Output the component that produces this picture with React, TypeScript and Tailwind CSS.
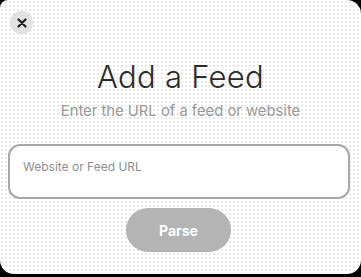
import React from 'react'

const App = () => {
    return (
        <div className="h-[277px] w-[361px] bg-black overflow-hidden" style={{fontFamily: 'Inter, "Noto Sans", sans-serif'}}>
            <div className="h-[274px] w-[361px] bg-white rounded-tl-[8px] rounded-tr-[14px] rounded-b-[14px] bg-[radial-gradient(#cfcfcf_0.6px,transparent_0.8px)] bg-[size:4px_4px] flex flex-col">
                {/* close */}
                <div className="pt-[11px] pl-[10px]">
                    <button className="h-[23px] w-[23px] rounded-full bg-[#e2e2e2] flex items-center justify-center">
                        <svg width="10" height="10" viewBox="0 0 10 10">
                            <path d="M1.5 1.5 L8.5 8.5 M8.5 1.5 L1.5 8.5" stroke="#222" strokeWidth="2.2" strokeLinecap="round"/>
                        </svg>
                    </button>
                </div>

                <h1 className="mt-[25px] text-center text-[31px] leading-[36px] font-light text-[#2b2b2b] tracking-[0.3px]">Add a Feed</h1>
                <p className="mt-[7px] text-center text-[14.8px] leading-[18px] text-[#9a9a9a]">Enter the URL of a feed or website</p>

                <div className="mt-[24px] px-[8px]">
                    <div className="h-[55px] w-[342px] rounded-[12px] border-2 border-[#a8a8a8] bg-white px-[13px] pt-[7px]">
                        <span className="text-[12px] leading-[14px] text-[#8f8f8f]">Website or Feed URL</span>
                    </div>
                </div>

                <div className="mt-[9px] flex justify-center pr-[4px]">
                    <button className="h-[44px] w-[105px] rounded-full bg-[#b4b4b4] text-white text-[14px] font-bold">Parse</button>
                </div>
            </div>
        </div>
    )
}

export default App
